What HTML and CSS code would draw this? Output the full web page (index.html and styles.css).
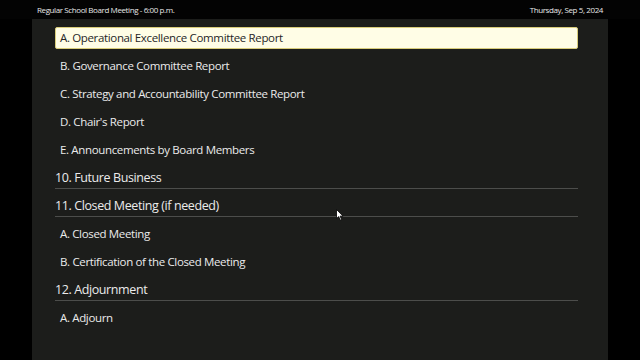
FILE: index.html
```html
<!DOCTYPE html>
<html lang="en">
<head>
    <meta charset="UTF-8">
    <meta name="viewport" content="width=device-width, initial-scale=1.0">
    <title>Regular School Board Meeting</title>
    <link rel="stylesheet" href="styles.css">
</head>
<body>
    <div class="screen">
        <div class="top-bar">
            <span class="meeting-title">Regular School Board Meeting - 6:00 p.m.</span>
            <span class="meeting-date">Thursday, Sep 5, 2024</span>
        </div>
        <div class="agenda">
            <ul class="agenda-list">
                <li class="agenda-item"><span class="item-box active">A. Operational Excellence Committee Report</span></li>
                <li class="agenda-item"><span class="item-box">B. Governance Committee Report</span></li>
                <li class="agenda-item"><span class="item-box">C. Strategy and Accountability Committee Report</span></li>
                <li class="agenda-item"><span class="item-box">D. Chair's Report</span></li>
                <li class="agenda-item"><span class="item-box">E. Announcements by Board Members</span></li>
                <li class="agenda-section">10. Future Business</li>
                <li class="agenda-section">11. Closed Meeting (if needed)</li>
                <li class="agenda-item"><span class="item-box">A. Closed Meeting</span></li>
                <li class="agenda-item"><span class="item-box">B. Certification of the Closed Meeting</span></li>
                <li class="agenda-section">12. Adjournment</li>
                <li class="agenda-item"><span class="item-box">A. Adjourn</span></li>
            </ul>
            <!-- mouse pointer left on screen -->
            <svg class="pointer" width="8" height="12" viewBox="0 0 8 12">
                <path d="M0.5 0.5 L0.5 9.5 L2.7 7.6 L4.3 11.2 L5.6 10.6 L4.1 7.1 L7 7.1 Z" fill="#ffffff" stroke="#000000" stroke-width="0.8"/>
            </svg>
        </div>
    </div>
</body>
</html>
```

FILE: styles.css
```css
body {
    margin: 0;
    background: #000000;
    font-family: "Open Sans", "Noto Sans", Arial, sans-serif;
    color: #ebebeb;
}
.screen {
    width: 640px;
    height: 360px;
    overflow: hidden;
    display: flex;
    flex-direction: column;
}
.top-bar {
    height: 19px;
    padding: 0 37px;
    display: flex;
    align-items: center;
    justify-content: space-between;
    font-size: 8px;
    letter-spacing: -0.4px;
    color: #e6e6e6;
    background: #030303;
}
.agenda {
    position: relative;
    flex-grow: 1;
    margin: 0 32px;
    padding: 5px 30px 0 23px;
    background: #1c1d1b;
}
.agenda-list {
    list-style: none;
    margin: 0;
    padding: 0;
}
.agenda-item {
    padding: 3px 0;
    height: 22px;
}
.item-box {
    display: block;
    height: 20px;
    line-height: 20px;
    padding: 0 4px;
    border: 1px solid transparent;
    border-radius: 2px;
    font-size: 11.5px;
    letter-spacing: -0.35px;
    white-space: nowrap;
}
.item-box.active {
    background: #fffde6;
    border-color: #d8cc7a;
    color: #262626;
}
.agenda-section {
    height: 20px;
    line-height: 20px;
    padding-top: 4px;
    margin-bottom: 3px;
    border-bottom: 1px solid #4c4d4b;
    font-size: 12.5px;
    letter-spacing: -0.4px;
    white-space: nowrap;
}
.pointer {
    position: absolute;
    left: 304px;
    top: 190px;
}
```
